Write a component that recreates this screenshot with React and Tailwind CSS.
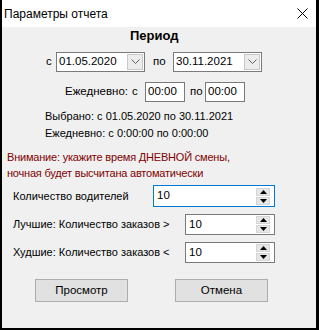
import React from "react";

const font = { fontFamily: '"Liberation Sans", Arial, sans-serif' };

function Chevron() {
  return (
    <svg width="9" height="6" viewBox="0 0 9 6" className="block">
      <path d="M0.5 0.5 L4.5 4.5 L8.5 0.5" fill="none" stroke="#606060" strokeWidth="1" />
    </svg>
  );
}

function DateBox({ value }) {
  return (
    <div className="flex h-[20px] w-[89px] items-center border border-[#7a7a7a] bg-white pl-[2px] pr-[1px]">
      <span className="flex-1 text-[11.5px] leading-none text-black">{value}</span>
      <div className="flex h-[16px] w-[16px] items-center justify-center border border-[#c8c8c8] bg-[#ececec]">
        <Chevron />
      </div>
    </div>
  );
}

function TimeBox({ value }) {
  return (
    <div className="flex h-[20px] w-[40px] items-center border border-[#7a7a7a] bg-white pl-[2px]">
      <span className="text-[11.5px] leading-none text-black">{value}</span>
    </div>
  );
}

function Spin({ value, width, focused, height }) {
  return (
    <div
      className={
        "flex items-center border bg-white pl-[3px] pr-[4px] " +
        (focused ? "border-[#0078d7]" : "border-[#7a7a7a]")
      }
      style={{ width, height }}
    >
      <span className="flex-1 text-[11.5px] leading-none text-black">{value}</span>
      <div className="flex flex-col gap-[1px]">
        <div className="flex h-[8px] w-[14px] items-center justify-center border border-[#d6d6d6] bg-[#e6e6e6]">
          <svg width="7" height="4" viewBox="0 0 7 4" className="block">
            <path d="M0 4 L3.5 0 L7 4 Z" fill="#000" />
          </svg>
        </div>
        <div className="flex h-[8px] w-[14px] items-center justify-center border border-[#d6d6d6] bg-[#e6e6e6]">
          <svg width="7" height="4" viewBox="0 0 7 4" className="block">
            <path d="M0 0 L7 0 L3.5 4 Z" fill="#000" />
          </svg>
        </div>
      </div>
    </div>
  );
}

function Btn({ children }) {
  return (
    <div className="flex h-[23px] w-[93px] items-center justify-center border border-[#adadad] bg-[#e1e1e1] text-[11.5px] text-black">
      {children}
    </div>
  );
}

export default function App() {
  return (
    <div
      className="flex h-[330px] w-[319px] flex-col bg-black pb-[2px] pl-[2px] pr-[3px]"
      style={font}
    >
      <div className="flex h-[27px] items-center justify-between bg-white pl-[2px] pr-[8px]">
        <span className="text-[12px] text-black">Параметры отчета</span>
        <svg width="11" height="11" viewBox="0 0 11 11" className="block">
          <path d="M0.5 0.5 L10.5 10.5 M10.5 0.5 L0.5 10.5" stroke="#000" strokeWidth="1" />
        </svg>
      </div>
      <div className="flex flex-1 flex-col bg-[#f0f0f0] text-[11px] text-black">
        <div className="mt-[1px] flex h-[16px] items-center pl-[128px] text-[13px] font-bold">Период</div>
        <div className="mt-[8px] flex h-[20px] items-center text-[11.5px]">
          <span className="ml-[44px] w-[10px]">с</span>
          <DateBox value="01.05.2020" />
          <span className="ml-[8px] w-[20px]">по</span>
          <DateBox value="30.11.2021" />
        </div>
        <div className="mt-[10px] flex h-[20px] items-center text-[11.5px]">
          <span className="ml-[63px] w-[67px]">Ежедневно:</span>
          <span className="w-[13px]">с</span>
          <TimeBox value="00:00" />
          <span className="ml-[5px] w-[15px]">по</span>
          <TimeBox value="00:00" />
        </div>
        <div className="mt-[6px] pl-[43px] leading-[17px]">Выбрано: с 01.05.2020 по 30.11.2021</div>
        <div className="pl-[43px] leading-[17px]">Ежедневно: с 0:00:00 по 0:00:00</div>
        <div className="mt-[7px] pl-[5px] leading-[16px] tracking-[-0.2px] text-[#800000]">
          <div>Внимание: укажите время ДНЕВНОЙ смены,</div>
          <div>ночная будет высчитана автоматически</div>
        </div>
        <div className="mt-[4px] flex items-center">
          <span className="ml-[11px] w-[140px]">Количество водителей</span>
          <Spin value="10" width={122} height={22} focused />
        </div>
        <div className="mt-[7px] flex items-center">
          <span className="ml-[11px] w-[172px]">Лучшие: Количество заказов &gt;</span>
          <Spin value="10" width={90} height={21} />
        </div>
        <div className="mt-[7px] flex items-center">
          <span className="ml-[11px] w-[172px]">Худшие: Количество заказов &lt;</span>
          <Spin value="10" width={90} height={21} />
        </div>
        <div className="mt-[16px] flex">
          <div className="ml-[33px]">
            <Btn>Просмотр</Btn>
          </div>
          <div className="ml-[47px]">
            <Btn>Отмена</Btn>
          </div>
        </div>
      </div>
    </div>
  );
}
